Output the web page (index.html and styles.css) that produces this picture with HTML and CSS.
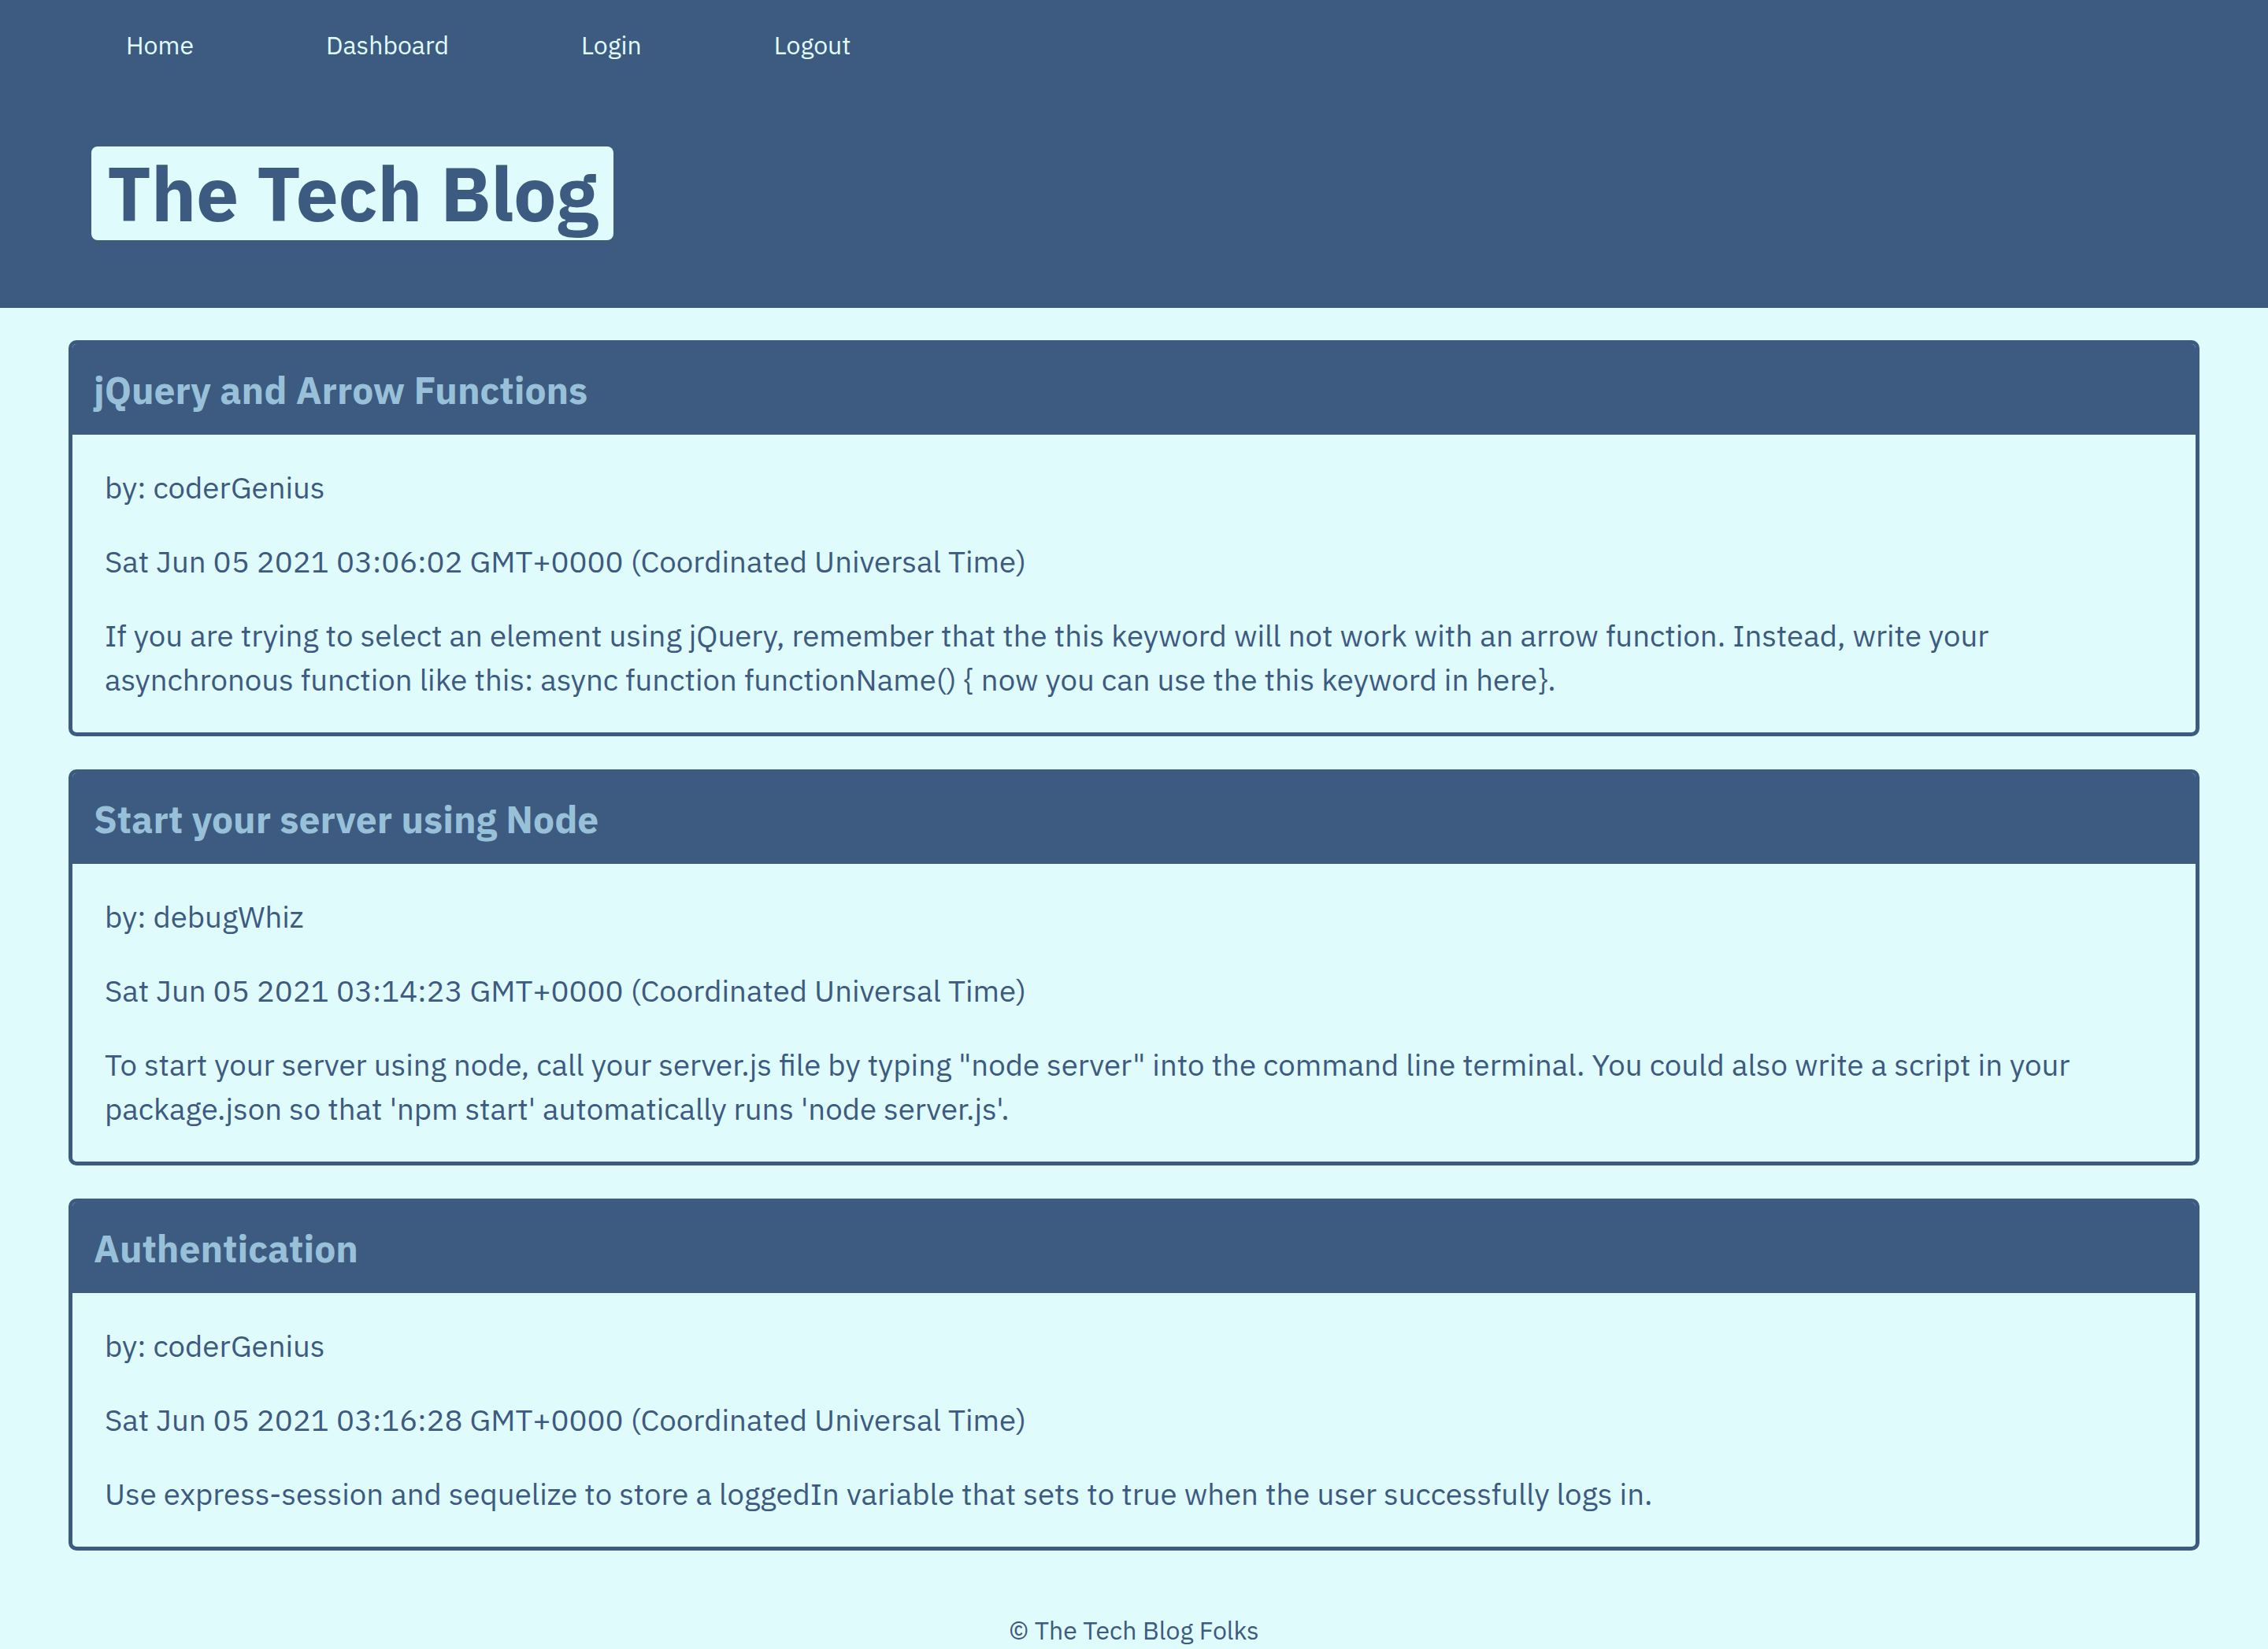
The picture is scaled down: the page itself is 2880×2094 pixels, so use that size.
FILE: index.html
```html
<!DOCTYPE html>
<html lang="en">
<head>
<meta charset="utf-8">
<title>The Tech Blog</title>
<link rel="stylesheet" href="styles.css">
</head>
<body>
<header class="site-header">
  <nav class="nav">
    <a class="nav-link" href="#">Home</a>
    <a class="nav-link" href="#">Dashboard</a>
    <a class="nav-link" href="#">Login</a>
    <a class="nav-link" href="#">Logout</a>
  </nav>
  <h1 class="site-title">The Tech Blog</h1>
</header>
<main class="posts">
  <article class="post">
    <h2 class="post-title">jQuery and Arrow Functions</h2>
    <div class="post-body">
      <p>by: coderGenius</p>
      <p>Sat Jun 05 2021 03:06:02 GMT+0000 (Coordinated Universal Time)</p>
      <p>If you are trying to select an element using jQuery, remember that the this keyword will not work with an arrow function. Instead, write your asynchronous function like this: async function functionName() { now you can use the this keyword in here}.</p>
    </div>
  </article>
  <article class="post">
    <h2 class="post-title">Start your server using Node</h2>
    <div class="post-body">
      <p>by: debugWhiz</p>
      <p>Sat Jun 05 2021 03:14:23 GMT+0000 (Coordinated Universal Time)</p>
      <p>To start your server using node, call your server.js file by typing "node server" into the command line terminal. You could also write a script in your package.json so that 'npm start' automatically runs 'node server.js'.</p>
    </div>
  </article>
  <article class="post">
    <h2 class="post-title">Authentication</h2>
    <div class="post-body">
      <p>by: coderGenius</p>
      <p>Sat Jun 05 2021 03:16:28 GMT+0000 (Coordinated Universal Time)</p>
      <p>Use express-session and sequelize to store a loggedIn variable that sets to true when the user successfully logs in.</p>
    </div>
  </article>
</main>
<footer class="site-footer">© The Tech Blog Folks</footer>
</body>
</html>
```

FILE: styles.css
```css
* { box-sizing: border-box; }
html, body { margin: 0; padding: 0; }
body {
  background: #e0fbfc;
  color: #3d5a80;
  font-family: "IBM Plex Sans", "Noto Sans", "Open Sans", sans-serif;
}
.site-header {
  background: #3d5a80;
  padding: 33px 0 86px 0;
}
.nav {
  display: flex;
  padding-left: 76px;
}
.nav-link {
  color: #e0fbfc;
  text-decoration: none;
  font-size: 32px;
  line-height: 48px;
  padding: 0 84px;
}
.site-title {
  display: inline-block;
  margin: 105px 0 0 116px;
  background: #e0fbfc;
  color: #3d5a80;
  border-radius: 8px;
  font-size: 96px;
  font-weight: 700;
  line-height: 115px;
  padding: 2px 20px 2px 20px;
}
.posts {
  padding: 41px 87px 0 87px;
  display: flex;
  flex-direction: column;
  gap: 42px;
}
.post {
  border: 5px solid #3d5a80;
  border-radius: 10px;
  overflow: hidden;
}
.post-title {
  margin: 0;
  background: #3d5a80;
  color: #98c1d9;
  font-size: 48px;
  font-weight: 700;
  height: 115px;
  display: flex;
  align-items: center;
  padding: 0 27px;
}
.post-body {
  padding: 39px 41px;
}
.post-body p {
  margin: 0 0 38px 0;
  font-size: 38.4px;
  line-height: 56px;
}
.post-body p:last-child { margin-bottom: 0; }
.site-footer {
  text-align: center;
  font-size: 32px;
  padding-top: 77px;
  line-height: 48px;
}
```
